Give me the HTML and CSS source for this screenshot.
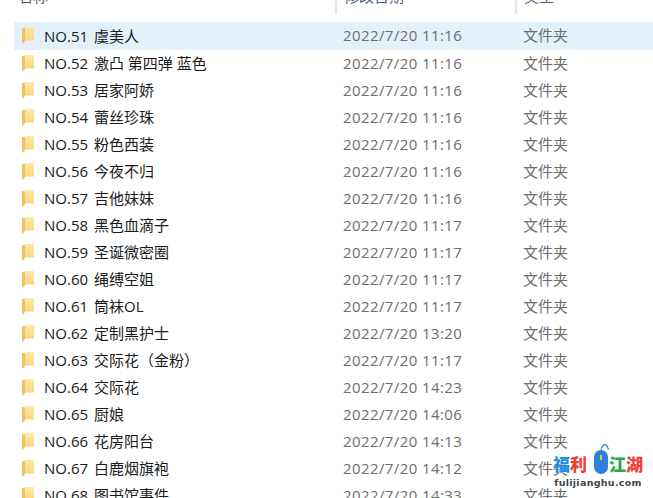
FILE: index.html
```html
<!DOCTYPE html>
<html lang="zh-CN">
<head>
    <meta charset="UTF-8">
    <title>文件夹列表</title>
    <link rel="stylesheet" href="styles.css">
</head>
<body>
    <svg class="defs" width="0" height="0">
        <defs>
            <linearGradient id="folder-fill" x1="0" y1="0" x2="0" y2="1">
                <stop offset="0" stop-color="#fde9a8"/>
                <stop offset="1" stop-color="#f8d67e"/>
            </linearGradient>
            <symbol id="folder" viewBox="0 0 12 17">
                <path d="M3 0H12V13.500H3Z" fill="url(#folder-fill)"/>
                <path d="M0 1H3V14L1 16.500H0Z" fill="#f0c15c"/>
            </symbol>
        </defs>
    </svg>

    <div class="header">
        <div class="head-cell head-name"><span>名称</span></div>
        <div class="head-cell"><span>修改日期</span></div>
        <div class="head-cell"><span>类型</span></div>
    </div>

    <div class="list">
        <div class="row selected"><div class="name"><svg class="icon"><use href="#folder"/></svg><span class="num">NO.51</span> 虞美人</div><div class="date">2022/7/20 11:16</div><div class="type">文件夹</div></div>
        <div class="row"><div class="name"><svg class="icon"><use href="#folder"/></svg><span class="num">NO.52</span> 激凸 第四弹 蓝色</div><div class="date">2022/7/20 11:16</div><div class="type">文件夹</div></div>
        <div class="row"><div class="name"><svg class="icon"><use href="#folder"/></svg><span class="num">NO.53</span> 居家阿娇</div><div class="date">2022/7/20 11:16</div><div class="type">文件夹</div></div>
        <div class="row"><div class="name"><svg class="icon"><use href="#folder"/></svg><span class="num">NO.54</span> 蕾丝珍珠</div><div class="date">2022/7/20 11:16</div><div class="type">文件夹</div></div>
        <div class="row"><div class="name"><svg class="icon"><use href="#folder"/></svg><span class="num">NO.55</span> 粉色西装</div><div class="date">2022/7/20 11:16</div><div class="type">文件夹</div></div>
        <div class="row"><div class="name"><svg class="icon"><use href="#folder"/></svg><span class="num">NO.56</span> 今夜不归</div><div class="date">2022/7/20 11:16</div><div class="type">文件夹</div></div>
        <div class="row"><div class="name"><svg class="icon"><use href="#folder"/></svg><span class="num">NO.57</span> 吉他妹妹</div><div class="date">2022/7/20 11:16</div><div class="type">文件夹</div></div>
        <div class="row"><div class="name"><svg class="icon"><use href="#folder"/></svg><span class="num">NO.58</span> 黑色血滴子</div><div class="date">2022/7/20 11:17</div><div class="type">文件夹</div></div>
        <div class="row"><div class="name"><svg class="icon"><use href="#folder"/></svg><span class="num">NO.59</span> 圣诞微密圈</div><div class="date">2022/7/20 11:17</div><div class="type">文件夹</div></div>
        <div class="row"><div class="name"><svg class="icon"><use href="#folder"/></svg><span class="num">NO.60</span> 绳缚空姐</div><div class="date">2022/7/20 11:17</div><div class="type">文件夹</div></div>
        <div class="row"><div class="name"><svg class="icon"><use href="#folder"/></svg><span class="num">NO.61</span> 筒袜OL</div><div class="date">2022/7/20 11:17</div><div class="type">文件夹</div></div>
        <div class="row"><div class="name"><svg class="icon"><use href="#folder"/></svg><span class="num">NO.62</span> 定制黑护士</div><div class="date">2022/7/20 13:20</div><div class="type">文件夹</div></div>
        <div class="row"><div class="name"><svg class="icon"><use href="#folder"/></svg><span class="num">NO.63</span> 交际花（金粉）</div><div class="date">2022/7/20 11:17</div><div class="type">文件夹</div></div>
        <div class="row"><div class="name"><svg class="icon"><use href="#folder"/></svg><span class="num">NO.64</span> 交际花</div><div class="date">2022/7/20 14:23</div><div class="type">文件夹</div></div>
        <div class="row"><div class="name"><svg class="icon"><use href="#folder"/></svg><span class="num">NO.65</span> 厨娘</div><div class="date">2022/7/20 14:06</div><div class="type">文件夹</div></div>
        <div class="row"><div class="name"><svg class="icon"><use href="#folder"/></svg><span class="num">NO.66</span> 花房阳台</div><div class="date">2022/7/20 14:13</div><div class="type">文件夹</div></div>
        <div class="row"><div class="name"><svg class="icon"><use href="#folder"/></svg><span class="num">NO.67</span> 白鹿烟旗袍</div><div class="date">2022/7/20 14:12</div><div class="type">文件夹</div></div>
        <div class="row"><div class="name"><svg class="icon"><use href="#folder"/></svg><span class="num">NO.68</span> 图书馆事件</div><div class="date">2022/7/20 14:33</div><div class="type">文件夹</div></div>
    </div>

    <div class="watermark">
        <div class="mark-top">
            <span class="mark-blue">福</span><span class="mark-red">利</span>
            <svg class="mouse" viewBox="0 0 16 30">
                <path d="M7 8C7 2 10 0 12 1C14 2 13 5 15 5" fill="none" stroke="#3a86d8" stroke-width="1.300"/>
                <rect x="0" y="6" width="14" height="24" rx="7" fill="#2f80dc"/>
                <rect x="6" y="11" width="2" height="5" fill="#e8c93a"/>
            </svg>
            <span class="mark-green">江</span><span class="mark-red">湖</span>
        </div>
        <div class="mark-url">fulijianghu.com</div>
    </div>
</body>
</html>
```

FILE: styles.css
```css
html, body { margin: 0; padding: 0; }
body { width: 653px; height: 498px; overflow: hidden; background: #fff; font-family: "Open Sans", "Noto Sans CJK SC", sans-serif; font-size: 15px; position: relative; }
.defs { display: block; height: 0; }

.header { display: grid; grid-template-columns: 335px 180px 1fr; height: 14px; overflow: hidden; }
.head-cell { border-left: 2px solid #e5e5e5; height: 14px; padding-left: 7px; color: #4c607a; overflow: hidden; }
.head-cell span { display: block; margin-top: -14px; line-height: 20px; }
.head-name { border-left: none; padding-left: 18px; }

.list { margin-top: 9px; margin-left: 14px; }
.row { display: grid; grid-template-columns: 321px 180px 1fr; height: 27px; line-height: 27px; white-space: pre; }
.selected { background: #e3f1fd; height: 28px; margin-top: -1px; }
.name { display: flex; align-items: center; color: #1a1a1a; }
.num { margin-right: 2px; }
.date, .type { padding-left: 8px; color: #6d6d6d; }
.date { letter-spacing: 0.4px; }
.icon { width: 12px; height: 17px; margin-left: 8px; margin-right: 10px; margin-top: -1px; flex: none; }

.watermark { position: absolute; left: 550px; top: 444px; width: 96px; text-align: center; }
.mark-top { display: flex; align-items: flex-end; justify-content: center; height: 30px; font-family: "Noto Sans CJK SC", sans-serif; font-size: 17px; font-weight: 900; line-height: 21px; text-shadow: 0 0 2px #fff; }
.mark-blue { color: #1f8fe0; }
.mark-red { color: #ee4036; }
.mark-green { color: #25a84a; }
.mouse { width: 16px; height: 30px; margin: 0 -1px 0 7px; }
.mark-url { font-family: "DejaVu Sans", sans-serif; font-size: 9.500px; font-weight: 700; letter-spacing: 0.3px; color: #444; line-height: 13px; margin-top: 2px; white-space: nowrap; text-shadow: 0 0 2px #fff; }
```
